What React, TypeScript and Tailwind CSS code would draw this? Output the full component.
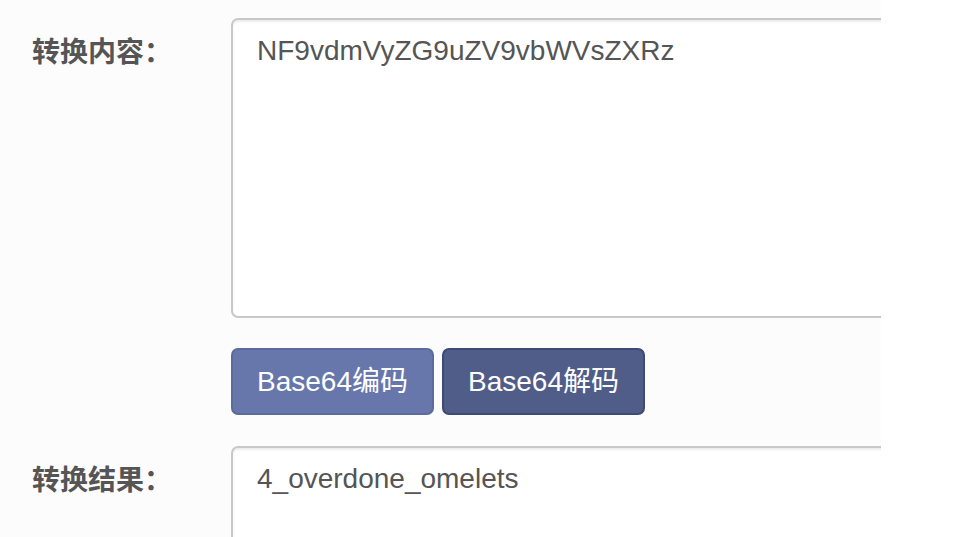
import React from 'react'

const font = "font-['Liberation_Sans','Noto_Sans_CJK_SC',sans-serif]"

const Field: React.FC<{ label: string; value: string; height: string }> = ({ label, value, height }) => (
  <div className="flex items-start">
    <div className="w-[231px] shrink-0 pl-[32px] pt-[15px] text-[28px] leading-[40px] font-bold text-[#555]">
      {label}
    </div>
    <textarea
      readOnly
      value={value}
      className={`${height} w-[700px] shrink-0 resize-none rounded-[7px] border-2 border-[#c8c8c8] bg-white px-[24px] pt-[11px] pb-[10px] text-[28px] leading-[40px] text-[#555] shadow-[inset_0_2px_2px_rgba(0,0,0,0.075)] outline-none ${font}`}
    />
  </div>
)

const App: React.FC = () => {
  return (
    <div className={`w-[970px] h-[537px] overflow-hidden bg-white ${font}`}>
      <div className="w-[881px] h-full overflow-hidden bg-[#fcfcfc] pt-[18px]">
        <Field label="转换内容：" value="NF9vdmVyZG9uZV9vbWVsZXRz" height="h-[300px]" />
        <div className="mt-[30px] ml-[231px] flex gap-[8px]">
          <button className="h-[67px] w-[203px] rounded-[7px] border-2 border-[#5b6b9e] bg-[#6777ab] text-[28px] text-white">
            Base64编码
          </button>
          <button className="h-[67px] w-[203px] rounded-[7px] border-2 border-[#3e4a72] bg-[#4f5d88] text-[28px] text-white">
            Base64解码
          </button>
        </div>
        <div className="mt-[31px]">
          <Field label="转换结果：" value="4_overdone_omelets" height="h-[300px]" />
        </div>
      </div>
    </div>
  )
}

export default App
